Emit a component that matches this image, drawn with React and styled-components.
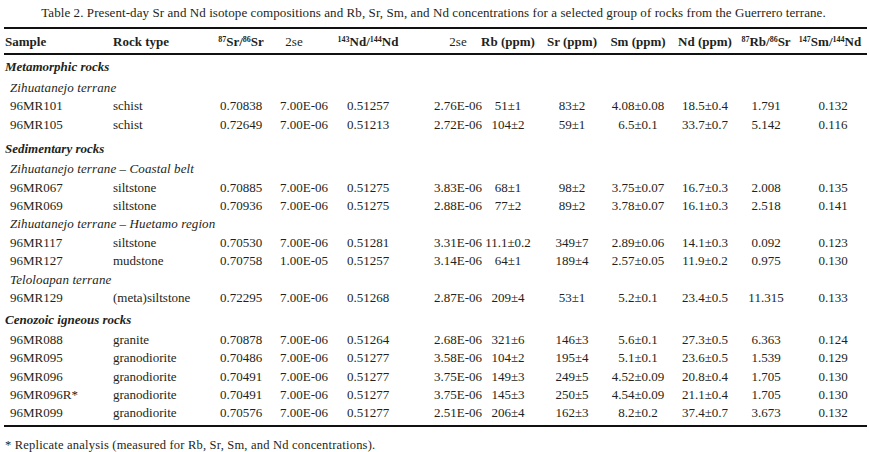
import React from "react";
import styled, { createGlobalStyle } from "styled-components";

const Global = createGlobalStyle`
  html, body { margin: 0; padding: 0; background: #fff; }
  body { font-family: "Liberation Serif", "Times New Roman", serif; color: #231f20; }
`;

const COLS = "104px 107px 52px 66px 70px 80px 50px 78px 54px 80px 42px 80px";

const Page = styled.div`
  width: 869px;
  height: 452px;
  overflow: hidden;
  display: flex;
  flex-direction: column;
  padding: 0 2px 0 4px;
  box-sizing: border-box;
  font-family: "Liberation Serif", "Times New Roman", serif;
  color: #231f20;
`;

const Title = styled.div`
  font-size: 13px;
  line-height: 16px;
  padding-top: 5px;
  text-align: center;
  white-space: nowrap;
  letter-spacing: 0.08px;
  margin-left: -4px;
`;

const Table = styled.div`
  width: 863px;
  margin-top: 6px;
  border-top: 2px solid #111;
  border-bottom: 2px solid #111;
  padding-bottom: 2px;
`;

const HeadRow = styled.div`
  display: grid;
  grid-template-columns: ${COLS};
  height: 26px;
  align-items: center;
  border-bottom: 2px solid #111;
  font-size: 13px;
  font-weight: bold;
  padding-top: 1px;
  box-sizing: border-box;
  white-space: nowrap;
`;

const Row = styled.div`
  display: grid;
  grid-template-columns: ${COLS};
  height: 18.4px;
  line-height: 18.4px;
  font-size: 13px;
  white-space: nowrap;
`;

const GroupRow = styled.div`
  height: ${(p) => (p.$first ? "21.5px" : "20px")};
  line-height: 18.4px;
  margin-top: ${(p) => p.$mt}px;
  padding-left: 1px;
  font-size: 13px;
  font-weight: bold;
  font-style: italic;
`;

const SubRow = styled.div`
  height: 18.4px;
  line-height: 18.4px;
  padding-left: 6px;
  font-size: 13px;
  font-style: italic;
  letter-spacing: 0.1px;
`;

const Cell = styled.div`
  display: flex;
  justify-content: ${(p) => (p.$align === "left" ? "flex-start" : "center")};
  padding-left: ${(p) => p.$pl || 0}px;
  padding-right: ${(p) => p.$pr || 0}px;
  font-weight: ${(p) => (p.$light ? "normal" : "inherit")};
  min-width: 0;
`;

const Sup = styled.sup`
  font-size: 8px;
  line-height: 0;
  vertical-align: 4px;
`;

const Footnote = styled.div`
  font-size: 12.5px;
  line-height: 16px;
  padding-top: 10px;
  padding-left: 1px;
  letter-spacing: 0.2px;
`;

const dataShifts = [6, 5, 0, 8, 0, 30, 0, 0, 0, 0, 0, 12];

const sections = [
  {
    group: "Metamorphic rocks",
    mt: 2.5,
    subs: [
      {
        name: "Zihuatanejo terrane",
        rows: [
          ["96MR101", "schist", "0.70838", "7.00E-06", "0.51257", "2.76E-06", "51±1", "83±2", "4.08±0.08", "18.5±0.4", "1.791", "0.132"],
          ["96MR105", "schist", "0.72649", "7.00E-06", "0.51213", "2.72E-06", "104±2", "59±1", "6.5±0.1", "33.7±0.7", "5.142", "0.116"],
        ],
      },
    ],
  },
  {
    group: "Sedimentary rocks",
    mt: 6,
    subs: [
      {
        name: "Zihuatanejo terrane – Coastal belt",
        rows: [
          ["96MR067", "siltstone", "0.70885", "7.00E-06", "0.51275", "3.83E-06", "68±1", "98±2", "3.75±0.07", "16.7±0.3", "2.008", "0.135"],
          ["96MR069", "siltstone", "0.70936", "7.00E-06", "0.51275", "2.88E-06", "77±2", "89±2", "3.78±0.07", "16.1±0.3", "2.518", "0.141"],
        ],
      },
      {
        name: "Zihuatanejo terrane – Huetamo region",
        rows: [
          ["96MR117", "siltstone", "0.70530", "7.00E-06", "0.51281", "3.31E-06", "11.1±0.2", "349±7", "2.89±0.06", "14.1±0.3", "0.092", "0.123"],
          ["96MR127", "mudstone", "0.70758", "1.00E-05", "0.51257", "3.14E-06", "64±1", "189±4", "2.57±0.05", "11.9±0.2", "0.975", "0.130"],
        ],
      },
      {
        name: "Teloloapan terrane",
        rows: [
          ["96MR129", "(meta)siltstone", "0.72295", "7.00E-06", "0.51268", "2.87E-06", "209±4", "53±1", "5.2±0.1", "23.4±0.5", "11.315", "0.133"],
        ],
      },
    ],
  },
  {
    group: "Cenozoic igneous rocks",
    mt: 3.5,
    subs: [
      {
        name: null,
        rows: [
          ["96MR088", "granite", "0.70878", "7.00E-06", "0.51264", "2.68E-06", "321±6", "146±3", "5.6±0.1", "27.3±0.5", "6.363", "0.124"],
          ["96MR095", "granodiorite", "0.70486", "7.00E-06", "0.51277", "3.58E-06", "104±2", "195±4", "5.1±0.1", "23.6±0.5", "1.539", "0.129"],
          ["96MR096", "granodiorite", "0.70491", "7.00E-06", "0.51277", "3.75E-06", "149±3", "249±5", "4.52±0.09", "20.8±0.4", "1.705", "0.130"],
          ["96MR096R*", "granodiorite", "0.70491", "7.00E-06", "0.51277", "3.75E-06", "145±3", "250±5", "4.54±0.09", "21.1±0.4", "1.705", "0.130"],
          ["96MR099", "granodiorite", "0.70576", "7.00E-06", "0.51277", "2.51E-06", "206±4", "162±3", "8.2±0.2", "37.4±0.7", "3.673", "0.132"],
        ],
      },
    ],
  },
];

function DataRow({ values }) {
  return (
    <Row>
      {values.map((v, i) => (
        <Cell key={i} $align={i < 2 ? "left" : "center"} $pl={dataShifts[i]}>
          {v}
        </Cell>
      ))}
    </Row>
  );
}

export default function App() {
  return (
    <>
      <Global />
      <Page>
        <Title>
          Table 2. Present-day Sr and Nd isotope compositions and Rb, Sr, Sm, and Nd concentrations for a selected group of rocks from the Guerrero terrane.
        </Title>
        <Table>
          <HeadRow>
            <Cell $align="left" $pl={1}>Sample</Cell>
            <Cell $align="left" $pl={5}>Rock type</Cell>
            <Cell><span><Sup>87</Sup>Sr/<Sup>86</Sup>Sr</span></Cell>
            <Cell $light $pr={12}>2se</Cell>
            <Cell><span><Sup>143</Sup>Nd/<Sup>144</Sup>Nd</span></Cell>
            <Cell $light $pl={30}>2se</Cell>
            <Cell>Rb (ppm)</Cell>
            <Cell>Sr (ppm)</Cell>
            <Cell>Sm (ppm)</Cell>
            <Cell>Nd (ppm)</Cell>
            <Cell><span><Sup>87</Sup>Rb/<Sup>86</Sup>Sr</span></Cell>
            <Cell $pl={6}><span><Sup>147</Sup>Sm/<Sup>144</Sup>Nd</span></Cell>
          </HeadRow>
          {sections.map((s, si) => (
            <React.Fragment key={s.group}>
              <GroupRow $first={si === 0} $mt={s.mt}>{s.group}</GroupRow>
              {s.subs.map((sub, j) => (
                <React.Fragment key={j}>
                  {sub.name && <SubRow>{sub.name}</SubRow>}
                  {sub.rows.map((r) => (
                    <DataRow key={r[0]} values={r} />
                  ))}
                </React.Fragment>
              ))}
            </React.Fragment>
          ))}
        </Table>
        <Footnote>* Replicate analysis (measured for Rb, Sr, Sm, and Nd concentrations).</Footnote>
      </Page>
    </>
  );
}
